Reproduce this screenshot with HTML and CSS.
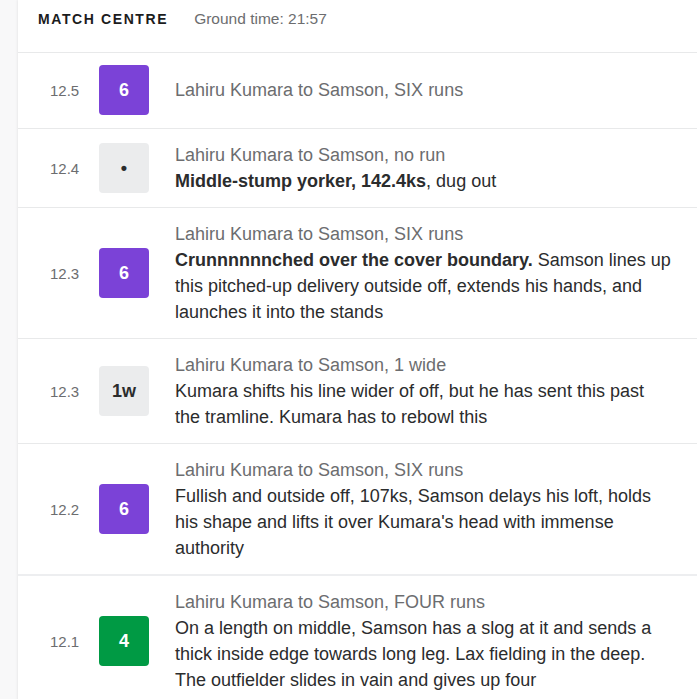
FILE: index.html
```html
<!DOCTYPE html>
<html>
<head>
  <meta name="viewport" content="width=device-width, initial-scale=1.0">
  <link rel="stylesheet" href="styles.css">
</head>
<body>
  <div class="panel">
    <div class="header">
      <span class="title">MATCH CENTRE</span>
      <span class="ground">Ground time: 21:57</span>
    </div>

    <div class="ball">
      <div class="over">12.5</div>
      <div class="badge six">6</div>
      <div class="comm">
        <div class="who">Lahiru Kumara to Samson, SIX runs</div>
      </div>
    </div>

    <div class="ball">
      <div class="over">12.4</div>
      <div class="badge dot">&bull;</div>
      <div class="comm">
        <div class="who">Lahiru Kumara to Samson, no run</div>
        <div class="text"><b>Middle-stump yorker, 142.4ks</b>, dug out</div>
      </div>
    </div>

    <div class="ball">
      <div class="over">12.3</div>
      <div class="badge six">6</div>
      <div class="comm">
        <div class="who">Lahiru Kumara to Samson, SIX runs</div>
        <div class="text"><b>Crunnnnnnched over the cover boundary.</b> Samson lines up this pitched-up delivery outside off, extends his hands, and launches it into the stands</div>
      </div>
    </div>

    <div class="ball">
      <div class="over">12.3</div>
      <div class="badge dot">1w</div>
      <div class="comm">
        <div class="who">Lahiru Kumara to Samson, 1 wide</div>
        <div class="text">Kumara shifts his line wider of off, but he has sent this past the tramline. Kumara has to rebowl this</div>
      </div>
    </div>

    <div class="ball end-over">
      <div class="over">12.2</div>
      <div class="badge six">6</div>
      <div class="comm">
        <div class="who">Lahiru Kumara to Samson, SIX runs</div>
        <div class="text">Fullish and outside off, 107ks, Samson delays his loft, holds his shape and lifts it over Kumara's head with immense authority</div>
      </div>
    </div>

    <div class="ball">
      <div class="over">12.1</div>
      <div class="badge four">4</div>
      <div class="comm">
        <div class="who">Lahiru Kumara to Samson, FOUR runs</div>
        <div class="text">On a length on middle, Samson has a slog at it and sends a thick inside edge towards long leg. Lax fielding in the deep. The outfielder slides in vain and gives up four</div>
      </div>
    </div>
  </div>
</body>
</html>
```

FILE: styles.css
```css
body {
  margin: 0;
  padding: 0 0 0 18px;
  background: #f8f8f9;
  font-family: "Liberation Sans", sans-serif;
  color: #2b2c2d;
}

.panel {
  background: #fff;
  box-shadow: -1px 0 2px rgba(0, 0, 0, 0.06);
  min-height: 100vh;
}

.header {
  display: flex;
  align-items: flex-start;
  gap: 26px;
  height: 53px;
  padding: 9px 20px 0 20px;
  border-bottom: 1px solid #e8e9ea;
  box-sizing: border-box;
}

.title {
  font-size: 14px;
  line-height: 20px;
  font-weight: bold;
  letter-spacing: 1.6px;
  color: #1b1c1d;
}

.ground {
  font-size: 15.5px;
  line-height: 20px;
  color: #6c6d6f;
}

.ball {
  display: flex;
  align-items: center;
  padding: 13px 0;
  border-bottom: 1px solid #e8e9ea;
}

.header + .ball {
  padding-top: 12px;
}

.ball.end-over {
  border-bottom: 2px solid #edeef0;
}

.over {
  width: 49px;
  padding-left: 32px;
  font-size: 15px;
  color: #6c6d6f;
}

.badge {
  flex: none;
  width: 50px;
  height: 50px;
  border-radius: 4px;
  display: flex;
  align-items: center;
  justify-content: center;
  font-size: 18px;
  font-weight: bold;
  color: #fff;
}

.badge.six {
  background: #7b42d7;
}

.badge.four {
  background: #009a44;
}

.badge.dot {
  background: #ebeced;
  color: #2b2c2d;
}

.comm {
  flex: 1;
  padding: 0 24px 0 26px;
  font-size: 18px;
  line-height: 26px;
}

.who {
  color: #6c6d6f;
}
```
